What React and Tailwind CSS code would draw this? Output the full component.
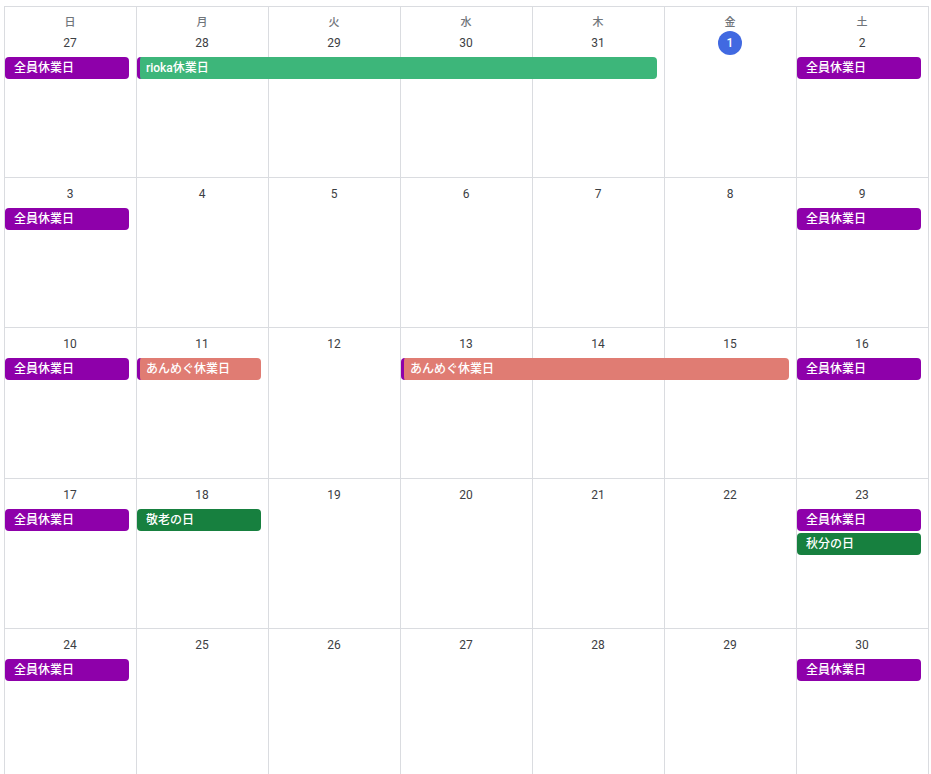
import React from 'react';

const PURPLE = 'bg-[#8e00aa]';
const GREEN = 'bg-[#3db67a]';
const CORAL = 'bg-[#e07c73]';
const BASIL = 'bg-[#17803f]';

const colStart = {
  1: 'col-start-1',
  2: 'col-start-2',
  3: 'col-start-3',
  4: 'col-start-4',
  5: 'col-start-5',
  6: 'col-start-6',
  7: 'col-start-7',
};

const colSpan = {
  1: 'col-span-1',
  2: 'col-span-2',
  3: 'col-span-3',
  4: 'col-span-4',
};

const rowStart = {
  2: 'row-start-2 mt-[3px]',
  3: 'row-start-3 mt-[2px]',
};

const weekdays = ['日', '月', '火', '水', '木', '金', '土'];

const holiday = (col) => ({ col, span: 1, row: 2, color: PURPLE, text: '全員休業日' });

const weeks = [
  {
    height: 'h-[171px]',
    days: [27, 28, 29, 30, 31, 1, 2],
    today: 1,
    events: [
      holiday(1),
      { col: 2, span: 4, row: 2, color: GREEN, stripe: true, text: 'rioka休業日' },
      holiday(7),
    ],
  },
  {
    height: 'h-[150px]',
    days: [3, 4, 5, 6, 7, 8, 9],
    events: [holiday(1), holiday(7)],
  },
  {
    height: 'h-[151px]',
    days: [10, 11, 12, 13, 14, 15, 16],
    events: [
      holiday(1),
      { col: 2, span: 1, row: 2, color: CORAL, stripe: true, text: 'あんめぐ休業日' },
      { col: 4, span: 3, row: 2, color: CORAL, stripe: true, text: 'あんめぐ休業日' },
      holiday(7),
    ],
  },
  {
    height: 'h-[150px]',
    days: [17, 18, 19, 20, 21, 22, 23],
    events: [
      holiday(1),
      { col: 2, span: 1, row: 2, color: BASIL, text: '敬老の日' },
      holiday(7),
      { col: 7, span: 1, row: 3, color: BASIL, text: '秋分の日' },
    ],
  },
  {
    height: 'h-[150px]',
    days: [24, 25, 26, 27, 28, 29, 30],
    events: [holiday(1), holiday(7)],
  },
];

const EventChip = ({ ev }) => (
  <div
    className={`${colStart[ev.col]} ${colSpan[ev.span]} ${rowStart[ev.row]} ${ev.color} ml-px mr-[7px] h-[22px] rounded-[4px] overflow-hidden text-white text-[12px] font-medium leading-[22px] whitespace-nowrap ${
      ev.stripe ? 'border-l-[3px] border-[#8e00aa] pl-[6px]' : 'pl-[9px]'
    }`}
  >
    {ev.text}
  </div>
);

const Week = ({ week, first }) => (
  <div className={`grid grid-cols-[repeat(7,132px)] grid-rows-[auto_auto_auto_1fr] ${week.height}`}>
    {/* cell borders */}
    {week.days.map((d, i) => (
      <div
        key={`cell-${i}`}
        className={`${colStart[i + 1]} row-start-1 row-span-4 border-l border-b border-[#dadce0]`}
      />
    ))}

    {/* day headers */}
    {week.days.map((d, i) => (
      <div
        key={`head-${i}`}
        className={`${colStart[i + 1]} row-start-1 flex flex-col items-center ${first ? 'pt-[7px]' : 'pt-[3px]'}`}
      >
        {first && (
          <div className="h-4 leading-[18px] text-[11px] font-medium text-[#70757a]">{weekdays[i]}</div>
        )}
        {week.today === d ? (
          <div className="w-6 h-6 mt-px -mb-px rounded-full bg-[#4169e1] text-white text-[12px] font-medium flex items-center justify-center">
            {d}
          </div>
        ) : (
          <div className="h-6 leading-[26px] text-[12px] text-[#3c4043]">{d}</div>
        )}
      </div>
    ))}

    {week.events.map((ev, i) => (
      <EventChip key={`ev-${i}`} ev={ev} />
    ))}
  </div>
);

export default function App() {
  return (
    <div className="w-[931px] h-[774px] overflow-hidden bg-white font-['Roboto','Noto_Sans_CJK_JP',sans-serif]">
      <div className="mt-[6px] ml-[4px] w-[925px] border-t border-r border-[#dadce0]">
        {weeks.map((week, i) => (
          <Week key={i} week={week} first={i === 0} />
        ))}
      </div>
    </div>
  );
}
